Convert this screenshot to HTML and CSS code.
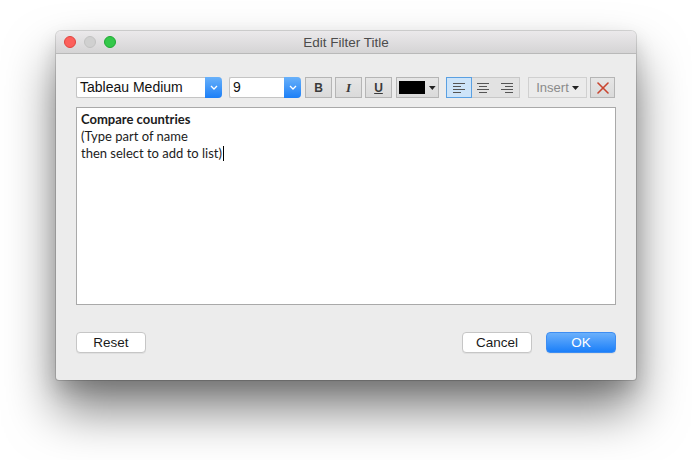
FILE: index.html
```html
<!DOCTYPE html>
<html>
<head>
<meta charset="utf-8">
<link rel="stylesheet" href="styles.css">
</head>
<body>
<div class="desk">
  <div class="window">
    <div class="titlebar">
      <div class="lights">
        <span class="light red"></span>
        <span class="light gray"></span>
        <span class="light green"></span>
      </div>
      <div class="title">Edit Filter Title</div>
    </div>
    <div class="content">
      <div class="toolbar">
        <div class="select font-select">
          <span class="select-text">Tableau Medium</span>
          <span class="select-btn"><svg width="8" height="5" viewBox="0 0 8 5"><path d="M1 1 L4 4 L7 1" fill="none" stroke="#fff" stroke-width="1.3"/></svg></span>
        </div>
        <div class="select size-select">
          <span class="select-text">9</span>
          <span class="select-btn"><svg width="8" height="5" viewBox="0 0 8 5"><path d="M1 1 L4 4 L7 1" fill="none" stroke="#fff" stroke-width="1.3"/></svg></span>
        </div>
        <div class="fmt-group">
          <button class="tbtn fmt b">B</button>
          <button class="tbtn fmt i">I</button>
          <button class="tbtn fmt u">U</button>
        </div>
        <button class="tbtn color">
          <span class="swatch"></span>
          <svg width="7" height="4" viewBox="0 0 7 4"><path d="M0 0 H7 L3.5 4 Z" fill="#222"/></svg>
        </button>
        <div class="align-group">
          <button class="abtn active">
            <svg width="12" height="10" viewBox="0 0 12 10"><g stroke="#555" stroke-width="1"><path d="M0 0.5H12"/><path d="M0 3.5H8"/><path d="M0 6.5H12"/><path d="M0 9.5H8"/></g></svg>
          </button>
          <button class="abtn">
            <svg width="12" height="10" viewBox="0 0 12 10"><g stroke="#555" stroke-width="1"><path d="M0 0.5H12"/><path d="M2 3.5H10"/><path d="M0 6.5H12"/><path d="M2 9.5H10"/></g></svg>
          </button>
          <button class="abtn">
            <svg width="12" height="10" viewBox="0 0 12 10"><g stroke="#555" stroke-width="1"><path d="M0 0.5H12"/><path d="M4 3.5H12"/><path d="M0 6.5H12"/><path d="M4 9.5H12"/></g></svg>
          </button>
        </div>
        <button class="tbtn insert">Insert <svg width="7" height="4" viewBox="0 0 7 4"><path d="M0 0 H7 L3.5 4 Z" fill="#222"/></svg></button>
        <button class="tbtn clear">
          <svg width="12" height="12" viewBox="0 0 12 12"><g stroke="#c9452f" stroke-width="1.6" stroke-linecap="round"><path d="M1 1L11 11"/><path d="M11 1L1 11"/></g></svg>
        </button>
      </div>
      <div class="editor">
        <div class="line bold">Compare countries</div>
        <div class="line">(Type part of name</div>
        <div class="line">then select to add to list)<span class="caret"></span></div>
      </div>
      <div class="footer">
        <button class="pbtn">Reset</button>
        <div class="right">
          <button class="pbtn">Cancel</button>
          <button class="pbtn primary">OK</button>
        </div>
      </div>
    </div>
  </div>
</div>
</body>
</html>
```
FILE: styles.css
```css
* { box-sizing: border-box; }
html, body { margin: 0; padding: 0; background: #ffffff; }
body { width: 692px; height: 460px; overflow: hidden; font-family: "Liberation Sans", Arial, sans-serif; }
.desk { padding: 31px 0 0 56px; }
.window {
  width: 580px;
  height: 349px;
  background: #ececec;
  border-radius: 5px 5px 3px 3px;
  box-shadow: 0 0 0 1px rgba(0,0,0,0.14), 0 30px 50px rgba(0,0,0,0.5), 0 10px 20px rgba(0,0,0,0.15);
  overflow: hidden;
  display: flex;
  flex-direction: column;
}
.titlebar {
  height: 23px;
  background: linear-gradient(#ebe9eb, #d5d4d5);
  border-bottom: 1px solid #b9b9b9;
  display: flex;
  align-items: center;
  position: relative;
}
.lights { display: flex; gap: 8px; padding-left: 8px; }
.light { width: 12px; height: 12px; border-radius: 50%; display: block; }
.red { background: #fc605c; border: 1px solid #e0443e; }
.gray { background: #d0d0d0; border: 1px solid #c2c2c2; }
.green { background: #34c84a; border: 1px solid #1fa933; }
.title {
  position: absolute; left: 0; right: 0; top: 0; bottom: 0;
  display: flex; align-items: center; justify-content: center;
  font-size: 13.5px; color: #4c4c4c;
  pointer-events: none;
}
.content { padding: 23px 20px 0 20px; display: flex; flex-direction: column; }
.toolbar { display: flex; align-items: center; height: 21px; }
.select {
  display: flex; height: 21px; background: #fff;
  border: 1px solid #c4c4c4; border-right: none; border-radius: 2px 4px 4px 2px;
  flex: none;
}
.select-text { flex: 1; font-size: 14px; color: #111; padding-left: 3px; line-height: 19px; }
.select-btn {
  width: 17px; margin: -1px 0; border-radius: 0 4px 4px 0;
  background: linear-gradient(#69b1fa, #1c7ff7);
  display: flex; align-items: center; justify-content: center;
}
.font-select { width: 146px; }
.size-select { width: 72px; margin-left: 7px; }
.fmt-group { display: flex; gap: 3px; margin-left: 4px; flex: none; }
button { font-family: inherit; padding: 0; margin: 0; cursor: default; flex: none; }
.tbtn {
  height: 21px; border: 1px solid #b5b5b5; background: linear-gradient(#e6e6e6, #dadada);
  display: flex; align-items: center; justify-content: center;
}
.fmt { width: 27px; font-size: 12px; font-weight: bold; color: #3a3a3a; }
.fmt.i { font-family: "Liberation Serif", serif; font-style: italic; font-size: 13px; }
.fmt.u { text-decoration: underline; }
.color { width: 43px; margin-left: 4px; gap: 4px; padding-right: 2px; }
.swatch { width: 28px; height: 13px; background: #000; display: block; margin-left: 2px; }
.align-group { display: flex; margin-left: 7px; border: 1px solid #c8c8c8; background: #e2e2e2; height: 21px; flex: none; }
.abtn {
  width: 24px; height: 19px; border: none; background: transparent;
  display: flex; align-items: center; justify-content: center;
}
.abtn.active { background: #cde4f9; outline: 1px solid #5aa0e2; }
.insert {
  width: 59px; margin-left: 8px; font-size: 13px; color: #8a8a8a; gap: 3px;
  background: #ebebeb; border-color: #d0d0d0;
}
.clear { width: 25px; margin-left: 3px; }
.editor {
  margin-top: 9px; height: 198px; background: #fff;
  border: 1px solid #a9a9a9; padding: 3px 4px;
  font-family: Lato, "Open Sans", sans-serif; font-size: 13px; color: #1c1c1c;
}
.line { line-height: 17px; height: 17px; }
.bold { font-weight: bold; }
.caret { display: inline-block; width: 1px; height: 15px; background: #000; vertical-align: -3px; margin-left: 1px; }
.footer { display: flex; justify-content: space-between; margin-top: 27px; }
.right { display: flex; gap: 14px; }
.pbtn {
  width: 70px; height: 21px; border-radius: 4px; background: #fff;
  border: 1px solid #c6c6c6; box-shadow: 0 1px 0 rgba(0,0,0,0.05);
  font-size: 13.5px; color: #1a1a1a;
}
.pbtn.primary {
  background: linear-gradient(#6bb0fb, #1b7ff9); border-color: #3d8df2; color: #fff;
}
```
